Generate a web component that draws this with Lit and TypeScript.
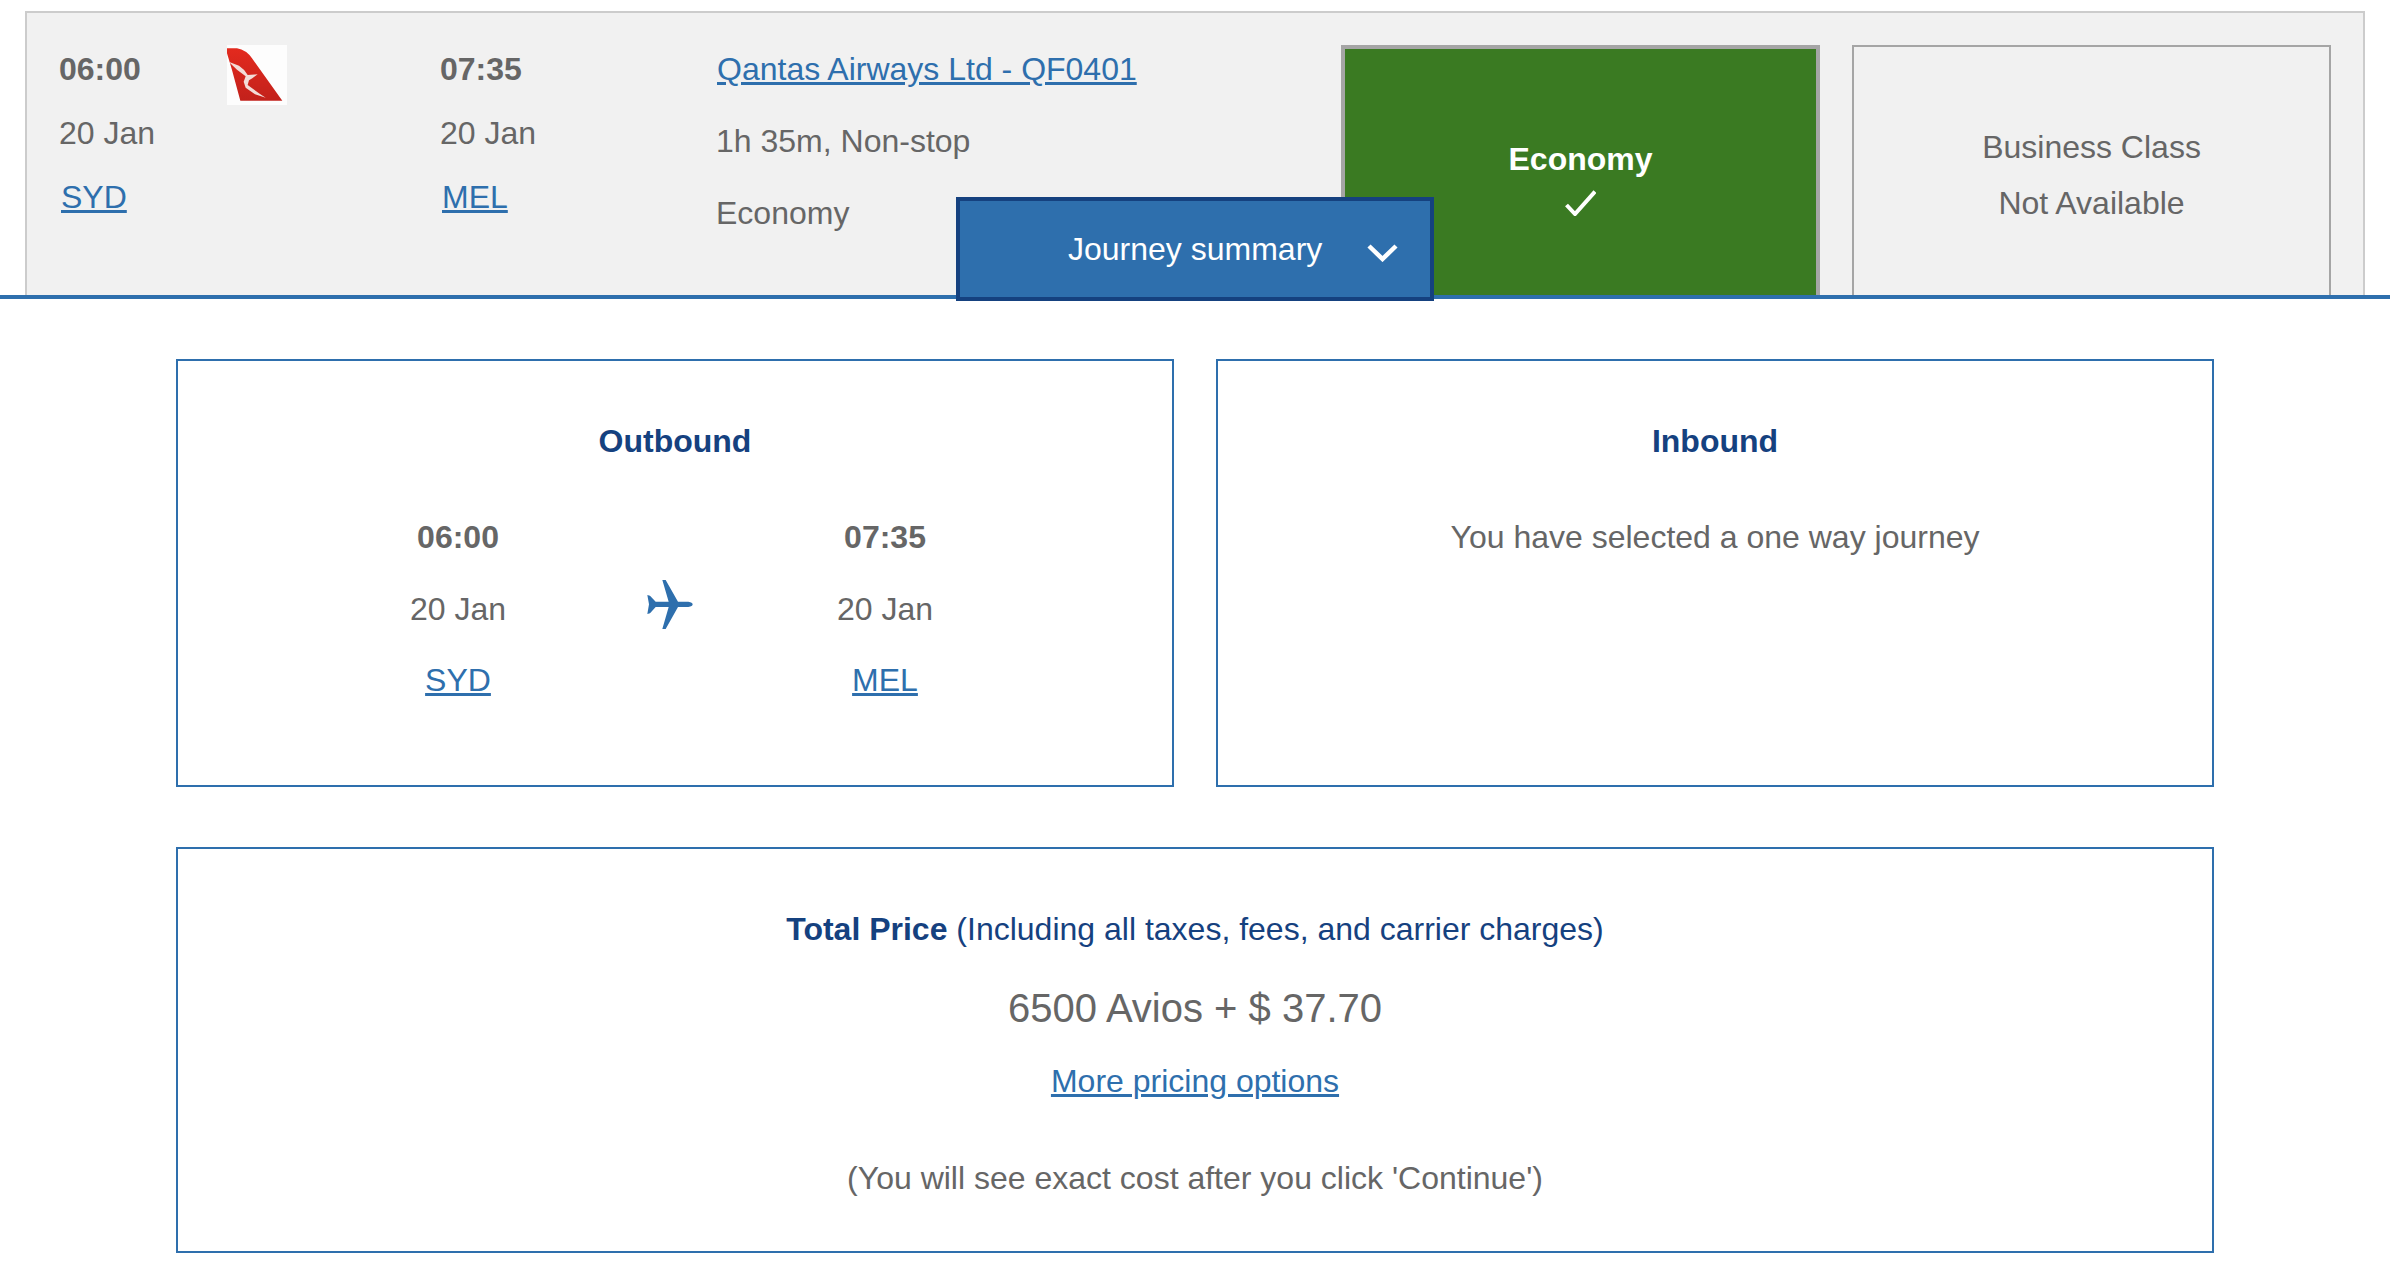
import { LitElement, html, css } from "lit";
import { customElement } from "lit/decorators.js";

const plane = html`<svg class="plane" viewBox="82 30 136 147" aria-hidden="true">
  <path fill="#2e6fad" d="M82 75 L90 77 L107 95 L146 95 L127 30 L137 30 L174 95 L205 95 Q218 97 218 103 Q218 109 205 111 L174 111 L137 177 L127 177 L146 111 L107 111 L90 130 L82 132 L87 103 Z"/>
</svg>`;

const tail = html`<svg class="tail" viewBox="0 0 180 180" aria-hidden="true">
  <defs><linearGradient id="tailred" x1="0" y1="0" x2="0" y2="1">
    <stop offset="0" stop-color="#e32a1e"/><stop offset="1" stop-color="#c2211b"/>
  </linearGradient></defs>
  <rect width="180" height="180" fill="#fdfdfd"/>
  <path fill="url(#tailred)" d="M0 10 L30 10 Q58 15 75 40 L166 167 L40 167 L15 75 L0 25 Z"/>
  <path fill="#f3dcd8" d="M5 50 L36 62 Q52 72 62 90 L92 88 L76 100 L66 106 L62 120 L98 146 L116 158 L84 148 L56 128 L50 110 L56 94 L30 74 Z"/>
</svg>`;

@customElement("app-root")
export class AppRoot extends LitElement {
  static styles = css`
    :host {
      display: block;
      font: 32px "Liberation Sans", Arial, sans-serif;
      color: #666;
      background: #fff;
      min-height: 1280px;
    }
    a { color: #2e6fad; text-decoration: underline; }
    .top {
      position: relative;
      padding: 11px 25px 0;
      border-bottom: 4px solid #2e6fad;
    }
    .fare {
      box-sizing: border-box;
      height: 284px;
      display: flex;
      padding: 20px 32px 0 32px;
      background: #f1f1f1;
      border: 2px solid #ccc;
      border-bottom: 0;
    }
    .stop { line-height: 64px; margin-top: 4px; }
    .stop b, .stop span, .stop a { display: block; }
    .stop a { margin-left: 2px; }
    .dep { width: 168px; }
    .logo { width: 213px; margin-top: 12px; }
    .arr { width: 276px; }
    .tail { display: block; width: 60px; height: 60px; filter: blur(0.5px); }
    .flight { width: 625px; line-height: 72px; }
    .flight div { height: 72px; }
    .flight a { margin-left: 1px; }
    .cabin {
      box-sizing: border-box;
      width: 479px;
      margin-top: 12px;
      text-align: center;
    }
    .cabin.on {
      border: 4px solid #a5a5a5;
      border-bottom: 0;
      background: #3a7a22;
      color: #fff;
      font-weight: 700;
      line-height: 48px;
      padding-top: 86px;
    }
    .check { display: block; width: 31px; height: 26px; margin: 7px auto 0; }
    .cabin.off {
      margin-left: 32px;
      border: 2px solid #a5a5a5;
      border-bottom: 0;
      line-height: 56px;
      padding-top: 72px;
    }
    .summary {
      position: absolute;
      left: 956px;
      top: 197px;
      box-sizing: border-box;
      width: 478px;
      height: 104px;
      display: flex;
      align-items: center;
      gap: 45px;
      padding-left: 108px;
      background: #2e6fad;
      border: 4px solid #15417f;
      color: #fff;
    }
    .chev { width: 31px; height: 18px; margin-top: 7px; }
    main { padding: 60px 176px 0; }
    .pair { display: grid; grid-template-columns: 998px 998px; gap: 42px; }
    .card {
      box-sizing: border-box;
      border: 2px solid #2e6fad;
      text-align: center;
      line-height: 72px;
    }
    .leg { height: 428px; padding-top: 44px; }
    h2 { margin: 0 0 24px; font-size: 32px; font-weight: 700; color: #15417f; }
    p { margin: 0; }
    .route {
      display: grid;
      grid-template-columns: 200px 1fr 200px;
      padding: 0 187px 0 180px;
    }
    .route b, .route span, .route a { display: block; }
    .route a { margin-top: -1px; }
    .plane { width: 46px; height: 49px; align-self: center; justify-self: center; margin: 0 3px 9px 0; }
    .total { height: 406px; margin-top: 60px; padding-top: 44px; }
    .total h3 { margin: 0; font-size: 32px; font-weight: 400; color: #15417f; }
    .price { font-size: 40px; margin: 7px 0 1px; }
    .note { margin-top: 25px; }
  `;

  render() {
    return html`
      <section class="top">
        <div class="fare">
          <div class="stop dep"><b>06:00</b><span>20 Jan</span><a href="#">SYD</a></div>
          <div class="logo">${tail}</div>
          <div class="stop arr"><b>07:35</b><span>20 Jan</span><a href="#">MEL</a></div>
          <div class="flight">
            <div><a href="#">Qantas Airways Ltd - QF0401</a></div>
            <div>1h 35m, Non-stop</div>
            <div>Economy</div>
          </div>
          <div class="cabin on">
            Economy
            <svg class="check" viewBox="0 0 31 26" aria-hidden="true">
              <path d="M1.5 15 L10 24 L30 1.5" fill="none" stroke="#fff" stroke-width="4"/>
            </svg>
          </div>
          <div class="cabin off">Business Class<br />Not Available</div>
        </div>
        <div class="summary">
          <span>Journey summary</span>
          <svg class="chev" viewBox="0 0 31 18" aria-hidden="true">
            <path d="M2 2 L15.5 15 L29 2" fill="none" stroke="#fff" stroke-width="4.5"/>
          </svg>
        </div>
      </section>
      <main>
        <div class="pair">
          <section class="card leg">
            <h2>Outbound</h2>
            <div class="route">
              <div><b>06:00</b><span>20 Jan</span><a href="#">SYD</a></div>
              ${plane}
              <div><b>07:35</b><span>20 Jan</span><a href="#">MEL</a></div>
            </div>
          </section>
          <section class="card leg">
            <h2>Inbound</h2>
            <p>You have selected a one way journey</p>
          </section>
        </div>
        <section class="card total">
          <h3><b>Total Price</b> (Including all taxes, fees, and carrier charges)</h3>
          <p class="price">6500 Avios + $ 37.70</p>
          <a href="#">More pricing options</a>
          <p class="note">(You will see exact cost after you click 'Continue')</p>
        </section>
      </main>
    `;
  }
}
